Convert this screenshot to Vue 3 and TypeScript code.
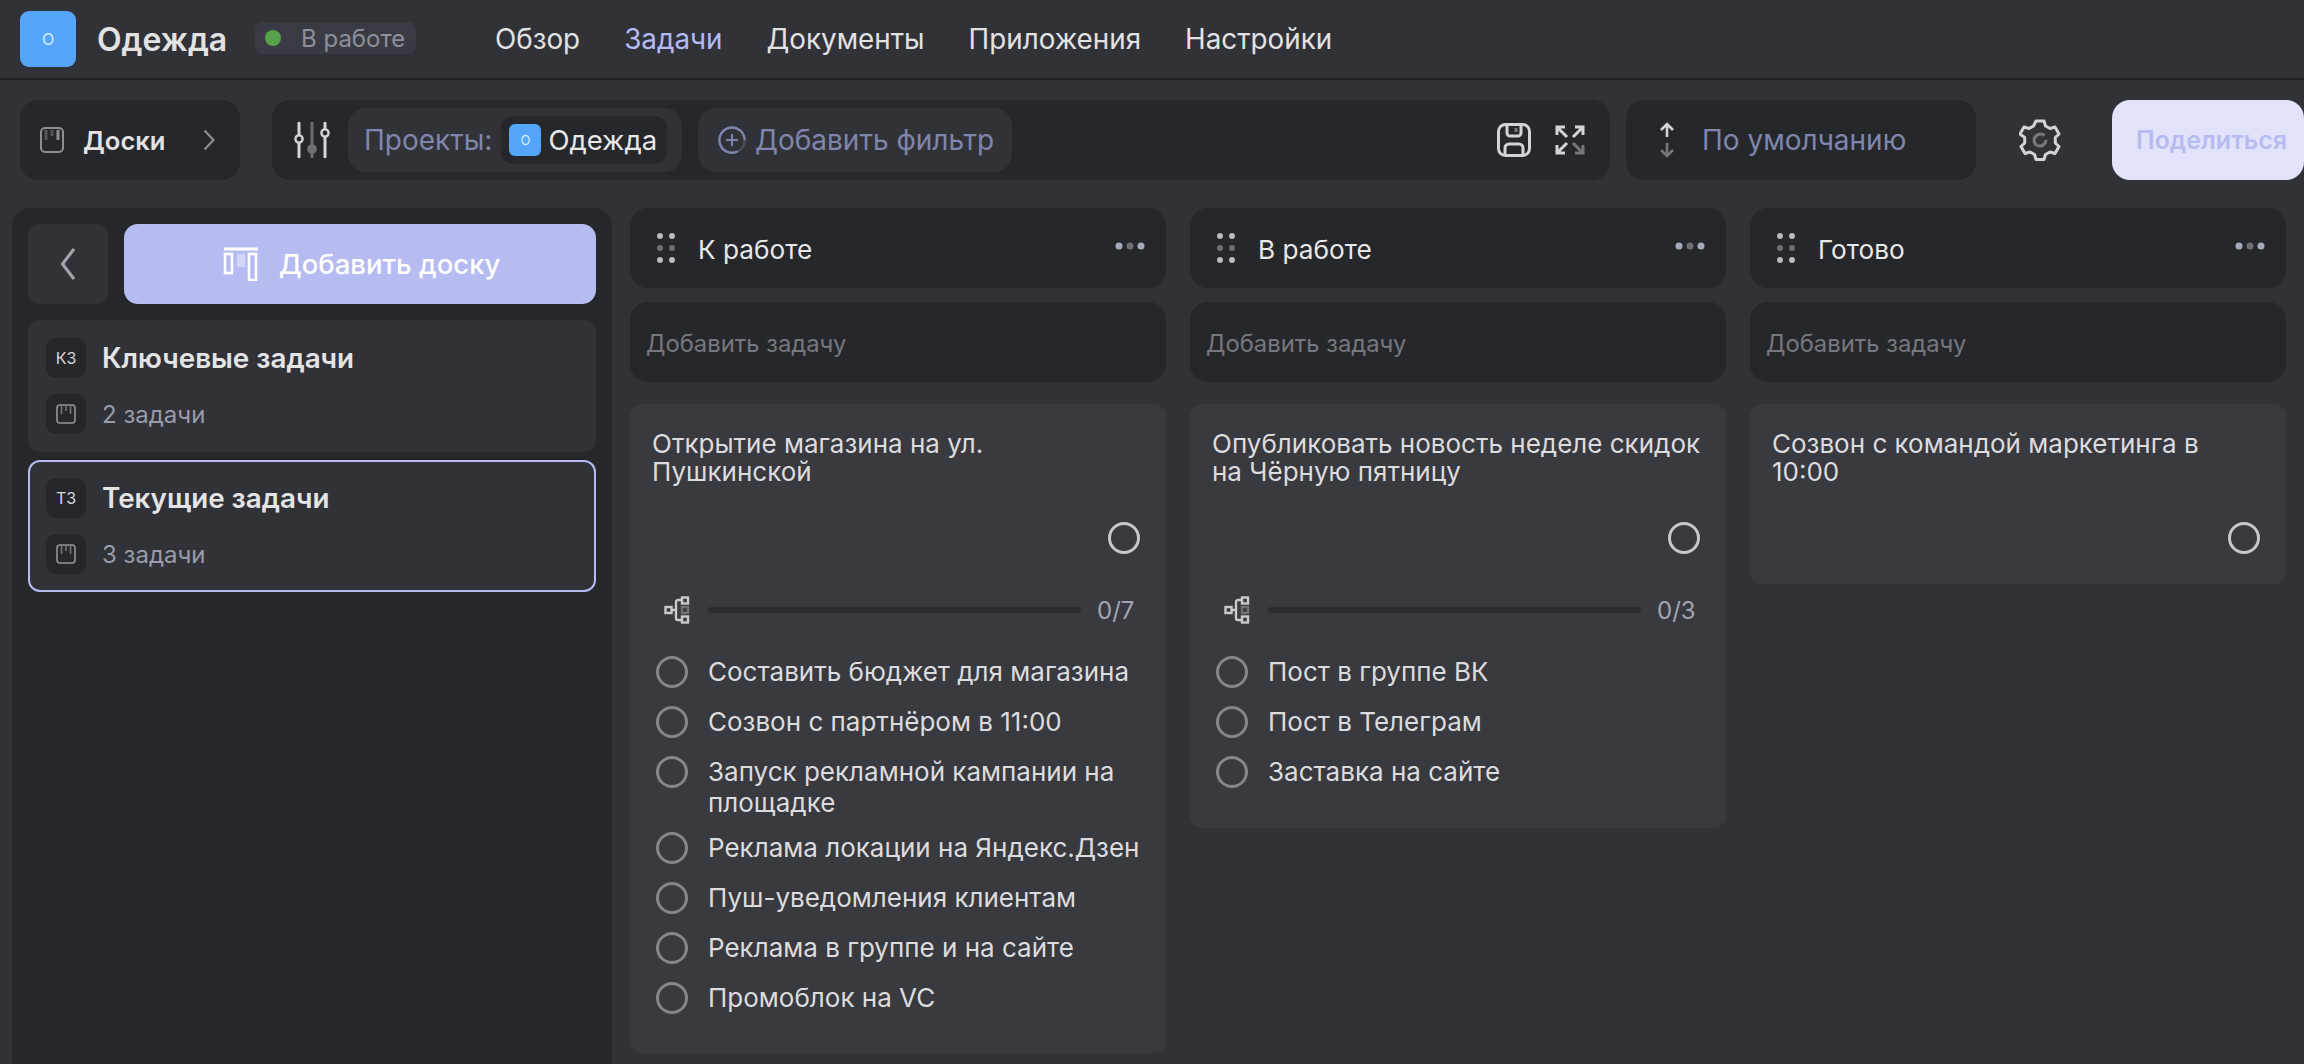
<script setup lang="ts">
interface Task { title: string; subs: string[]; height: number }
interface Col { name: string; task: Task }
const nav = ['Обзор', 'Задачи', 'Документы', 'Приложения', 'Настройки']
const boards = [
  { code: 'КЗ', name: 'Ключевые задачи', count: '2 задачи', active: false },
  { code: 'ТЗ', name: 'Текущие задачи', count: '3 задачи', active: true },
]
const cols: Col[] = [
  { name: 'К работе', task: { title: 'Открытие магазина на ул. Пушкинской', height: 649, subs: ['Составить бюджет для магазина', 'Созвон с партнёром в 11:00', 'Запуск рекламной кампании на площадке', 'Реклама локации на Яндекс.Дзен', 'Пуш-уведомления клиентам', 'Реклама в группе и на сайте', 'Промоблок на VC'] } },
  { name: 'В работе', task: { title: 'Опубликовать новость неделе скидок на Чёрную пятницу', height: 424, subs: ['Пост в группе ВК', 'Пост в Телеграм', 'Заставка на сайте'] } },
  { name: 'Готово', task: { title: 'Созвон с командой маркетинга в 10:00', height: 180, subs: [] } },
]
</script>

<template>
  <div class="page">
    <header class="top">
      <div class="logo">О</div>
      <div class="project">Одежда</div>
      <div class="status"><span class="dot"></span>В работе</div>
      <nav class="nav">
        <span v-for="n in nav" :key="n" :class="{ on: n === 'Задачи' }">{{ n }}</span>
      </nav>
    </header>

    <section class="toolbar">
      <div class="panel boards-btn">
        <svg width="24" height="26" viewBox="0 0 24 26" fill="none">
          <rect x="1" y="1" width="22" height="24" rx="4" stroke="#8d8e94" stroke-width="2" />
          <path d="M6 3v10M12 3v6" stroke="#55565b" stroke-width="3" /><path d="M18 3v10" stroke="#8d8e94" stroke-width="3" />
        </svg>
        <span class="boards-label">Доски</span>
        <svg class="chev" width="12" height="22" viewBox="0 0 12 22" fill="none"><path d="M1.5 1.5 10.5 11l-9 9.5" stroke="#8d8e94" stroke-width="2.2" /></svg>
      </div>

      <div class="panel filters">
        <svg class="sliders" width="36" height="36" viewBox="0 0 36 36" fill="none">
          <path d="M5 1v34M31 1v34" stroke="#d4d4d6" stroke-width="3" stroke-linecap="round" />
          <path d="M18 1v34" stroke="#6d6e73" stroke-width="3" stroke-linecap="round" />
          <circle cx="5" cy="17" r="3.6" fill="#26272b" stroke="#d4d4d6" stroke-width="2.4" />
          <circle cx="18" cy="27" r="3.6" fill="#6d6e73" stroke="#6d6e73" stroke-width="2.4" />
          <circle cx="31" cy="11" r="3.6" fill="#26272b" stroke="#d4d4d6" stroke-width="2.4" />
        </svg>
        <div class="chip-wrap">
          <span class="muted-label">Проекты:</span>
          <div class="chip"><span class="mini-logo">О</span>Одежда</div>
        </div>
        <div class="add-filter">
          <svg width="28" height="28" viewBox="0 0 28 28" fill="none">
            <path d="M20 25.2A12.6 12.6 0 1 1 26.6 14" stroke="#7f86ad" stroke-width="2.4" />
            <path d="M26.6 14A12.6 12.6 0 0 1 20 25.2" stroke="#4c4e5e" stroke-width="2.4" />
            <path d="M14 8v12M8 14h12" stroke="#7f86ad" stroke-width="2" />
          </svg>
          <span class="muted-label">Добавить фильтр</span>
        </div>
        <div class="filter-actions">
          <svg width="34" height="34" viewBox="0 0 34 34" fill="none">
            <rect x="1.5" y="1.5" width="31" height="31" rx="7" stroke="#d4d4d6" stroke-width="3" />
            <path d="M10 2v8a3 3 0 0 0 3 3h8a3 3 0 0 0 3-3V2" stroke="#d4d4d6" stroke-width="3" />
            <path d="M8 32v-7a4 4 0 0 1 4-4h10a4 4 0 0 1 4 4v7" stroke="#d4d4d6" stroke-width="3" />
            <path d="M19 5v4" stroke="#77787c" stroke-width="3" />
          </svg>
          <svg width="30" height="30" viewBox="0 0 30 30" fill="none">
            <path d="M2 10V2h8M2 2l10 10M20 2h8v8M28 2 18 12M2 20v8h8M2 28l10-10" stroke="#d4d4d6" stroke-width="3" />
            <path d="M28 20v8h-8M28 28 18 18" stroke="#77787c" stroke-width="3" />
          </svg>
        </div>
      </div>

      <div class="panel sort">
        <svg width="16" height="36" viewBox="0 0 16 36" fill="none">
          <path d="M8 15V2M2 8l6-6 6 6" stroke="#d4d4d6" stroke-width="2.6" />
          <path d="M8 21v13M2 28l6 6 6-6" stroke="#77787c" stroke-width="2.6" />
        </svg>
        <span class="muted-label">По умолчанию</span>
      </div>

      <div class="gear">
        <svg width="42" height="42" viewBox="0 0 42 42" fill="none">
          <path d="M17 2h8l1.500 5 4.500 2.500 5-1.500 4 7-3.700 3.500v5.500l3.700 3.500-4 7-5-1.500-4.500 2.500-1.500 5h-8l-1.500-5-4.500-2.500-5 1.500-4-7 3.700-3.500v-5.500L1 15l4-7 5 1.500L14.500 7z" stroke="#d4d4d6" stroke-width="3" stroke-linejoin="round" />
          <path d="M25.500 16.500A6.400 6.400 0 0 0 15 21a6.400 6.400 0 0 0 3 5.500" stroke="#77787c" stroke-width="3" />
          <path d="M18 26.500A6.400 6.400 0 0 0 27 21" stroke="#77787c" stroke-width="3" />
        </svg>
      </div>

      <button class="share">Поделиться</button>
    </section>

    <main class="content">
      <aside class="side">
        <div class="side-top">
          <button class="back">
            <svg width="16" height="34" viewBox="0 0 16 34" fill="none"><path d="M14 2 2.500 17 14 32" stroke="#a4a5ad" stroke-width="3" /></svg>
          </button>
          <button class="add-board">
            <svg width="36" height="34" viewBox="0 0 36 34" fill="none">
              <path d="M1 2h34" stroke="#fff" stroke-width="3" />
              <rect x="2" y="7" width="7" height="19" stroke="#fff" stroke-width="2.600" />
              <rect x="14" y="7" width="8" height="13" fill="#d3d6f8" />
              <rect x="26" y="7" width="7" height="26" stroke="#fff" stroke-width="2.600" />
            </svg>
            Добавить доску
          </button>
        </div>
        <div v-for="b in boards" :key="b.code" class="board" :class="{ active: b.active }">
          <div class="board-row">
            <span class="badge">{{ b.code }}</span>
            <span class="board-name">{{ b.name }}</span>
          </div>
          <div class="board-row">
            <span class="badge">
              <svg width="20" height="20" viewBox="0 0 20 20" fill="none">
                <rect x="1" y="1" width="18" height="18" rx="3" stroke="#94959c" stroke-width="1.600" />
                <path d="M5.500 2v8M10 2v5M14.500 2v8" stroke="#74757c" stroke-width="1.600" />
              </svg>
            </span>
            <span class="board-count">{{ b.count }}</span>
          </div>
        </div>
      </aside>

      <div class="columns">
        <div v-for="c in cols" :key="c.name" class="col">
          <div class="col-head">
            <svg width="18" height="30" viewBox="0 0 18 30" fill="none">
              <circle cx="3" cy="3" r="3" fill="#b9b9c0" /><circle cx="15" cy="3" r="3" fill="#b9b9c0" />
              <circle cx="3" cy="15" r="3" fill="#6d6e76" /><circle cx="15" cy="15" r="3" fill="#6d6e76" />
              <circle cx="3" cy="27" r="3" fill="#b9b9c0" /><circle cx="15" cy="27" r="3" fill="#b9b9c0" />
            </svg>
            <span class="col-name">{{ c.name }}</span>
            <svg class="more" width="30" height="8" viewBox="0 0 30 8" fill="none">
              <circle cx="4" cy="4" r="3.500" fill="#a6a8bb" /><circle cx="15" cy="4" r="3.500" fill="#6d6e76" /><circle cx="26" cy="4" r="3.500" fill="#a6a8bb" />
            </svg>
          </div>
          <div class="col-add">Добавить задачу</div>
          <article class="task" :style="{ height: c.task.height + 'px' }">
            <div class="task-title">{{ c.task.title }}</div>
            <span class="ring main-ring"></span>
            <template v-if="c.task.subs.length">
              <div class="progress">
                <svg width="26" height="28" viewBox="0 0 26 28" fill="none">
                  <rect x="1.500" y="11" width="6" height="6" stroke="#c9cace" stroke-width="2.400" />
                  <path d="M8 14h5M12 6v16a2 2 0 0 0 2 2h4M12 6a2 2 0 0 1 2-2h4" stroke="#c9cace" stroke-width="2.400" />
                  <rect x="18" y="1.500" width="6" height="6" stroke="#c9cace" stroke-width="2.400" />
                  <rect x="18" y="11" width="6" height="6" fill="#3a3b40" stroke="#6d6e73" stroke-width="2.400" />
                  <rect x="18" y="20.500" width="6" height="6" stroke="#c9cace" stroke-width="2.400" />
                </svg>
                <div class="bar"></div>
                <span class="prog-num">0/{{ c.task.subs.length }}</span>
              </div>
              <ul class="subs">
                <li v-for="s in c.task.subs" :key="s"><span class="ring sub-ring"></span><span class="sub-text">{{ s }}</span></li>
              </ul>
            </template>
          </article>
        </div>
      </div>
    </main>
  </div>
</template>

<style>
html, body { margin: 0; background: #313238; }
</style>

<style scoped>
.page { width: 2304px; height: 1064px; overflow: hidden; background: #313238; font-family: Inter, "Noto Sans", sans-serif; color: #e2e2e3; box-sizing: border-box; }
.top { height: 78px; border-bottom: 2px solid #1f2023; display: flex; align-items: center; padding-left: 20px; box-sizing: content-box; }
.logo { width: 56px; height: 56px; border-radius: 9px; background: #53a6fa; color: #d6e9fd; font-size: 16px; display: flex; align-items: center; justify-content: center; flex: none; }
.project { margin-left: 21px; font-size: 32px; font-weight: 600; width: 158px; }
.status { width: 161px; height: 32px; margin-top: -2px; border-radius: 8px; background: #3a3b42; color: #8e8f9c; font-size: 24px; display: flex; align-items: center; box-sizing: border-box; padding-left: 10px; }
.dot { width: 16px; height: 16px; border-radius: 50%; background: #54a24a; margin-right: 20px; }
.nav { display: flex; gap: 44px; margin-left: 79px; font-size: 27.8px; }
.nav .on { color: #b6bbf2; }
.toolbar { display: flex; margin-top: 20px; padding-left: 20px; height: 80px; }
.panel { background: #26272b; border-radius: 18px; display: flex; align-items: center; height: 80px; box-sizing: border-box; flex: none; }
.boards-btn { width: 220px; padding-left: 20px; }
.boards-label { margin-left: 19px; font-size: 25.6px; font-weight: 600; }
.chev { margin-left: 37px; }
.filters { width: 1338px; margin-left: 32px; padding-left: 22px; }
.sliders { flex: none; }
.chip-wrap { margin-left: 18px; width: 334px; height: 64px; border-radius: 18px; background: #313238; display: flex; align-items: center; padding-left: 16px; box-sizing: border-box; }
.muted-label { color: #7f86ad; font-size: 28px; white-space: nowrap; }
.chip { margin-left: 9px; width: 166px; height: 48px; border-radius: 12px; background: #26272b; display: flex; align-items: center; padding-left: 8px; box-sizing: border-box; font-size: 27.5px; color: #e8e8e9; flex: none; }
.mini-logo { width: 32px; height: 32px; border-radius: 6px; background: #53a6fa; color: #d6e9fd; font-size: 13px; display: flex; align-items: center; justify-content: center; margin-right: 7px; flex: none; }
.add-filter { margin-left: 16px; width: 314px; height: 64px; border-radius: 18px; background: #313238; display: flex; align-items: center; padding-left: 20px; gap: 9px; box-sizing: border-box; }
.filter-actions { margin-left: auto; display: flex; align-items: center; gap: 24px; padding-right: 25px; }
.sort { width: 350px; margin-left: 16px; padding-left: 33px; gap: 27px; }
.gear { width: 42px; margin-left: 43px; margin-right: 51px; display: flex; align-items: center; flex: none; }
.share { width: 192px; height: 80px; border: 0; border-radius: 18px; background: #e1e3fb; color: #b6bbf2; font: 600 25px Inter, "Noto Sans", sans-serif; text-align: left; padding: 0 0 0 24px; flex: none; white-space: nowrap; overflow: hidden; }
.content { display: flex; margin-top: 28px; padding-left: 12px; align-items: flex-start; }
.side { width: 600px; height: 900px; flex: none; background: #26272b; border-radius: 18px 18px 0 0; padding: 16px; box-sizing: border-box; display: flex; flex-direction: column; gap: 8px; }
.side-top { display: flex; gap: 16px; margin-bottom: 8px; }
.back { width: 80px; height: 80px; border: 0; border-radius: 10px; background: #313238; display: flex; align-items: center; justify-content: center; flex: none; padding: 0; }
.add-board { width: 472px; height: 80px; border: 0; border-radius: 14px; background: #b6bbf2; color: #fff; font: 500 27.5px Inter, "Noto Sans", sans-serif; display: flex; align-items: center; justify-content: center; gap: 20px; padding: 0 0 0 3px; }
.board { width: 568px; height: 132px; border-radius: 12px; background: #313238; box-sizing: border-box; padding: 18px; display: flex; flex-direction: column; gap: 16px; border: 0; }
.board.active { border: 2px solid #b6bbf2; padding: 16px; }
.board-row { display: flex; align-items: center; gap: 16px; height: 40px; }
.badge { width: 40px; height: 40px; border-radius: 9px; background: #26272b; display: flex; align-items: center; justify-content: center; font-size: 16px; color: #d8d8da; flex: none; }
.board-name { font-size: 27.8px; font-weight: 600; color: #e4e4e5; }
.board-count { font-size: 24px; color: #9a9ba8; }
.columns { display: flex; gap: 24px; margin-left: 18px; }
.col { width: 536px; flex: none; }
.col-head { height: 80px; border-radius: 18px; background: #26272b; display: flex; align-items: center; padding: 0 21px 0 27px; box-sizing: border-box; }
.col-name { margin-left: 23px; font-size: 26.2px; color: #e8e8e9; padding-top: 2px; }
.more { margin-left: auto; margin-top: -4px; }
.col-add { margin-top: 14px; height: 80px; border-radius: 18px; background: #26272b; color: #77787e; font-size: 23.8px; display: flex; align-items: center; padding: 2px 0 0 16px; box-sizing: border-box; }
.task { position: relative; margin-top: 22px; border-radius: 12px; background: #393a40; box-sizing: border-box; padding: 26px 22px 0; }
.task-title { font-size: 26px; line-height: 28px; color: #dcdcde; width: 490px; }
.ring { display: block; box-sizing: border-box; border-radius: 50%; flex: none; }
.main-ring { position: absolute; left: 478px; top: 118px; width: 32px; height: 32px; border: 3px solid #c8c8cb; }
.progress { position: absolute; left: 34px; top: 192px; display: flex; align-items: center; height: 28px; width: 473px; }
.bar { width: 373px; height: 6px; border-radius: 3px; background: #2b2c31; margin-left: 18px; flex: none; }
.prog-num { margin-left: 16px; font-size: 24px; color: #a3a4b0; }
.subs { position: absolute; left: 26px; top: 252px; width: 490px; list-style: none; margin: 0; padding: 0; display: flex; flex-direction: column; gap: 14px; }
.subs li { display: flex; gap: 20px; align-items: flex-start; min-height: 36px; }
.sub-ring { width: 32px; height: 32px; border: 3px solid #85868c; }
.sub-text { font-size: 26px; line-height: 31px; color: #dcdcde; }
</style>
